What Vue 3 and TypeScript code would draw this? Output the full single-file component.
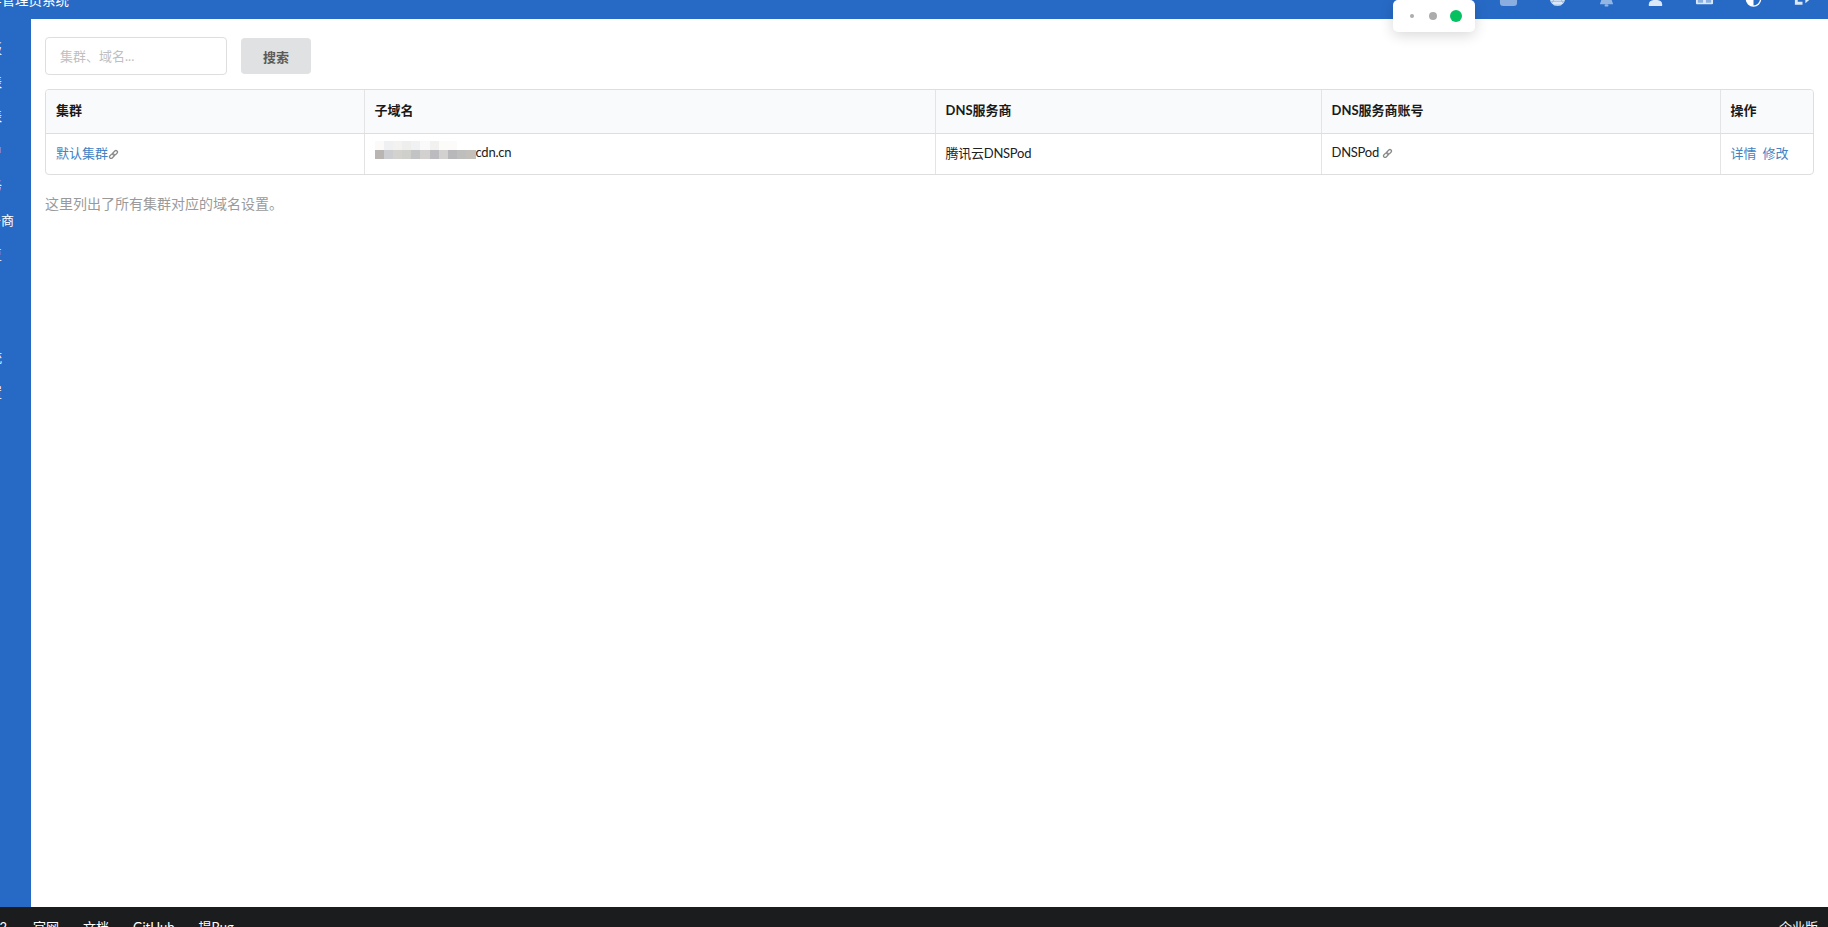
<script setup lang="ts">
// only the right end of each label is on screen, the rest runs off the left edge
const sideItems = [
  { label: '看板' },
  { label: '网站列表' },
  { label: '集群列表' },
  { label: '用户' },
  { label: '财务' },
  { label: 'DNS服务商', active: true },
  { label: '问题修复' },
]
const lowerItems = ['系统', '设置']

const topIcons = ['dash', 'globe', 'bell', 'user', 'cols', 'half', 'exit']
const columns = ['集群', '子域名', 'DNS服务商', 'DNS服务商账号', '操作']

// blurred part of the domain name, left to right
const mosaicTop = ['#fbfaf8', '#eef0f2', '#f3f2f1', '#eeeeec', '#eff1f3', '#fafafa', '#f3f1ef', '#fbfbfa', '#fcfbf9', '#ffffff', '#ffffff']
const mosaicBottom = ['#b8b5b3', '#cbcdd0', '#d4d2cf', '#cfcfcc', '#c2c3c5', '#d2d1cf', '#bcbbbf', '#d2d1cf', '#b8b7ba', '#bebebc', '#c3c0bc']
</script>

<template>
  <div class="page">
    <header class="topbar">
      <span class="brand"><span>集群管理员系统</span></span>
      <div class="top-icons">
        <svg v-for="ic in topIcons" :key="ic" class="top-icon" viewBox="0 0 20 20">
          <rect v-if="ic === 'dash'" x="1" y="2" width="18" height="17" rx="3.5" fill="#fff" opacity="0.46" />
          <g v-else-if="ic === 'globe'">
            <circle cx="10" cy="11" r="8" fill="currentColor" />
            <path d="M4 16 L10 6 M16 16 L10 6 M3 14 H17 M6 18 L14 18" stroke="#8ab0e3" stroke-width="0.8" fill="none" />
          </g>
          <g v-else-if="ic === 'bell'" fill="#fff" opacity="0.5">
            <path d="M10 1c3 0 4.5 3 4.5 6v3l2.5 7H3l2.5-7V7c0-3 1.500-6 4.500-6z" />
            <rect x="8" y="17" width="4" height="2.600" rx="1.300" />
          </g>
          <g v-else-if="ic === 'user'" fill="currentColor">
            <circle cx="10" cy="8" r="5" />
            <path d="M3 19v-2c0-3 3-4.500 7-4.500s7 1.500 7 4.500v2z" />
          </g>
          <g v-else-if="ic === 'cols'">
            <rect x="1" y="1" width="18" height="16" rx="1" fill="currentColor" />
            <rect x="3" y="12" width="5.500" height="3.500" fill="#8ab0e3" />
            <rect x="11.500" y="12" width="5.500" height="3.500" fill="#8ab0e3" />
          </g>
          <g v-else-if="ic === 'half'">
            <circle cx="10" cy="11.500" r="7.500" fill="none" stroke="#fff" stroke-width="1.400" />
            <path d="M10 4a7.500 7.500 0 0 0 0 15z" fill="#fff" />
          </g>
          <path v-else d="M2 6h7v3H5v5.500h5v3H2zM8 9.500h5V6l6 5-6 5v-3.500H8z" fill="currentColor" />
        </svg>
      </div>
    </header>

    <div class="popup">
      <i class="dot dot-s"></i>
      <i class="dot dot-m"></i>
      <i class="dot dot-l"></i>
    </div>

    <div class="middle">
      <aside class="side">
        <div
          v-for="item in sideItems"
          :key="item.label"
          class="side-item"
          :class="{ active: item.active }"
        >
          <span>{{ item.label }}</span>
        </div>
        <div class="side-lower">
          <div v-for="label in lowerItems" :key="label" class="side-item">
            <span>{{ label }}</span>
          </div>
        </div>
      </aside>

      <main class="content">
        <form class="search" @submit.prevent>
          <input class="search-input" placeholder="集群、域名..." />
          <button class="search-btn" type="button">搜索</button>
        </form>

        <div class="table-wrap">
          <table class="grid">
            <colgroup>
              <col class="col-cluster" />
              <col class="col-domain" />
              <col class="col-provider" />
              <col class="col-account" />
              <col />
            </colgroup>
            <thead>
              <tr>
                <th v-for="c in columns" :key="c">{{ c }}</th>
              </tr>
            </thead>
            <tbody>
              <tr>
                <td>
                  <a class="link">默认集群</a>
                  <svg class="chain" viewBox="0 0 12 12">
                    <g transform="rotate(-45 6 6)">
                      <rect x="0.600" y="4.300" width="6" height="3.400" rx="1.700" />
                      <rect x="5.400" y="4.300" width="6" height="3.400" rx="1.700" />
                    </g>
                  </svg>
                </td>
                <td>
                  <span class="mosaic">
                    <span class="mosaic-row upper">
                      <i v-for="(color, i) in mosaicTop" :key="i" :style="{ background: color }"></i>
                    </span>
                    <span class="mosaic-row">
                      <i v-for="(color, i) in mosaicBottom" :key="i" :style="{ background: color }"></i>
                    </span>
                  </span>cdn.cn
                </td>
                <td>腾讯云DNSPod</td>
                <td>
                  DNSPod
                  <svg class="chain" viewBox="0 0 12 12">
                    <g transform="rotate(-45 6 6)">
                      <rect x="0.600" y="4.300" width="6" height="3.400" rx="1.700" />
                      <rect x="5.400" y="4.300" width="6" height="3.400" rx="1.700" />
                    </g>
                  </svg>
                </td>
                <td class="ops">
                  <a class="link">详情</a>
                  <a class="link">修改</a>
                </td>
              </tr>
            </tbody>
          </table>
        </div>

        <p class="tip">这里列出了所有集群对应的域名设置。</p>
      </main>
    </div>

    <footer class="foot">
      <span class="version"><span>v1.2</span></span>
      <span>官网</span>
      <span>文档</span>
      <span>GitHub</span>
      <span>提Bug</span>
      <span class="edition">企业版</span>
    </footer>
  </div>
</template>

<style scoped>
.page {
  position: relative;
  height: 927px;
  display: flex;
  flex-direction: column;
  font-family: Lato, "Noto Sans CJK SC", sans-serif;
  font-size: 13px;
  color: #212121;
  overflow: hidden;
}

.topbar {
  flex: none;
  height: 19px;
  background: #276ac6;
  color: #fff;
  display: flex;
  justify-content: space-between;
  overflow: hidden;
}
.brand {
  width: 69px;
  height: 13px;
  margin-top: -6px;
  font-size: 13.500px;
  line-height: 13px;
  display: flex;
  justify-content: flex-end;
  white-space: nowrap;
}
.top-icons {
  display: flex;
  gap: 30px;
  margin-right: 16px;
  margin-top: -12px;
  height: 19px;
}
.top-icon {
  width: 19px;
  height: 19px;
  color: #dce8f7;
}

.popup {
  position: absolute;
  top: 0;
  left: 1393px;
  width: 82px;
  height: 32px;
  box-sizing: border-box;
  padding: 0 13px 0 17px;
  background: #fff;
  border-radius: 5px;
  box-shadow: 0 3px 14px rgba(0, 0, 0, 0.16);
  display: flex;
  align-items: center;
  justify-content: space-between;
}
.dot {
  display: block;
  border-radius: 50%;
  background: #acacac;
}
.dot-s {
  width: 4px;
  height: 4px;
}
.dot-m {
  width: 8px;
  height: 8px;
  margin-left: 2px;
}
.dot-l {
  width: 12px;
  height: 12px;
  background: #07c160;
}

.middle {
  flex: 1;
  min-height: 0;
  display: flex;
}

.side {
  flex: none;
  width: 31px;
  padding-top: 11px;
  box-sizing: border-box;
  background: #276ac6;
  color: #fff;
  overflow: hidden;
}
.side-lower {
  margin-top: 68.800px;
}
.side-item {
  width: 2px;
  height: 34.400px;
  display: flex;
  justify-content: flex-end;
  align-items: center;
  white-space: nowrap;
}
.side-item.active {
  width: 14px;
}

.content {
  flex: 1;
  min-width: 0;
  padding: 18px 14px 0;
}

.search {
  display: flex;
  align-items: center;
  gap: 14px;
}
.search-input {
  width: 182px;
  height: 38px;
  box-sizing: border-box;
  padding: 0 14px;
  border: 1px solid #dededf;
  border-radius: 4px;
  font-family: inherit;
  font-size: 13px;
  outline: none;
}
.search-input::placeholder {
  color: #bfbfbf;
}
.search-btn {
  width: 70px;
  height: 36px;
  border: 0;
  border-radius: 4px;
  background: #e0e1e2;
  color: #5a5a5a;
  font-family: inherit;
  font-size: 13px;
  font-weight: 700;
}

.table-wrap {
  margin-top: 14px;
  border: 1px solid #dededf;
  border-radius: 4px;
  overflow: hidden;
}
.grid {
  width: 100%;
  table-layout: fixed;
  border-collapse: collapse;
}
.col-cluster {
  width: 318px;
}
.col-domain {
  width: 571px;
}
.col-provider {
  width: 386px;
}
.col-account {
  width: 399px;
}
.grid th {
  height: 43px;
  box-sizing: border-box;
  padding: 0 10px 3px;
  background: #f9fafb;
  border-bottom: 1px solid #dededf;
  text-align: left;
  font-weight: 700;
  color: #1a1a1a;
}
.grid td {
  height: 41px;
  box-sizing: border-box;
  padding: 0 10px 3px;
  white-space: nowrap;
  letter-spacing: -0.250px;
}
.grid th + th,
.grid td + td {
  border-left: 1px solid #e4e4e5;
}

.link {
  color: #4183c4;
  letter-spacing: 0;
}
.ops .link + .link {
  margin-left: 6px;
}
.chain {
  width: 11px;
  height: 11px;
  vertical-align: -2px;
}
.chain rect {
  fill: none;
  stroke: #8a8a8a;
  stroke-width: 1.400;
}

.mosaic {
  position: relative;
  display: inline-block;
  width: 101px;
  height: 9px;
  vertical-align: -2px;
}
.mosaic-row {
  display: flex;
  height: 9px;
}
.mosaic-row.upper {
  position: absolute;
  left: 0;
  top: -9px;
}
.mosaic-row i {
  flex: none;
  width: 9.200px;
}

.tip {
  margin: 19px 0 0;
  font-size: 14px;
  line-height: 20px;
  color: #9a9a9a;
}

.foot {
  flex: none;
  height: 20px;
  box-sizing: border-box;
  padding: 11px 10px 0 0;
  background: #1b1c1d;
  color: #fff;
  display: flex;
  gap: 24px;
  line-height: 18px;
  white-space: nowrap;
  overflow: hidden;
}
.version {
  width: 7px;
  margin-right: 2px;
  display: flex;
  justify-content: flex-end;
}
.edition {
  margin-left: auto;
}
</style>
